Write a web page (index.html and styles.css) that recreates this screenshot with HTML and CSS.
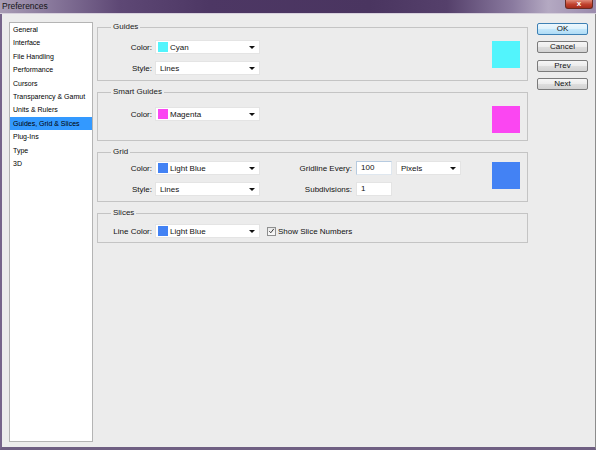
FILE: index.html
```html
<!DOCTYPE html>
<html>
<head>
<meta charset="utf-8">
<link rel="stylesheet" href="styles.css">
</head>
<body>
<div class="window">
  <div class="titlebar">
    <span class="title">Preferences</span>
    <span class="close">x</span>
  </div>
  <div class="body">
    <ul class="nav">
      <li>General</li>
      <li>Interface</li>
      <li>File Handling</li>
      <li>Performance</li>
      <li>Cursors</li>
      <li>Transparency &amp; Gamut</li>
      <li>Units &amp; Rulers</li>
      <li class="sel">Guides, Grid &amp; Slices</li>
      <li>Plug-Ins</li>
      <li>Type</li>
      <li>3D</li>
    </ul>
    <div class="panel">
      <fieldset class="group g-guides">
        <legend>Guides</legend>
        <div class="gbody">
          <div class="rows">
            <div class="row"><span class="lbl">Color:</span><div class="dd"><span class="chip cyan"></span>Cyan<i class="arrow"></i></div></div>
            <div class="row"><span class="lbl">Style:</span><div class="dd plain">Lines<i class="arrow"></i></div></div>
          </div>
          <div class="swatch cyan sw-guides"></div>
        </div>
      </fieldset>
      <fieldset class="group g-smart">
        <legend>Smart Guides</legend>
        <div class="gbody">
          <div class="rows rows-smart">
            <div class="row"><span class="lbl">Color:</span><div class="dd"><span class="chip magenta"></span>Magenta<i class="arrow"></i></div></div>
          </div>
          <div class="swatch magenta"></div>
        </div>
      </fieldset>
      <fieldset class="group g-grid">
        <legend>Grid</legend>
        <div class="gbody">
          <div class="rows">
            <div class="row">
              <span class="lbl">Color:</span><div class="dd"><span class="chip blue"></span>Light Blue<i class="arrow"></i></div>
              <span class="lbl2">Gridline Every:</span><div class="inp focus">100</div><div class="dd plain dd-small">Pixels<i class="arrow"></i></div>
            </div>
            <div class="row">
              <span class="lbl">Style:</span><div class="dd plain">Lines<i class="arrow"></i></div>
              <span class="lbl2">Subdivisions:</span><div class="inp">1</div>
            </div>
          </div>
          <div class="swatch blue sw-grid"></div>
        </div>
      </fieldset>
      <fieldset class="group g-slices">
        <legend>Slices</legend>
        <div class="gbody">
          <div class="rows">
            <div class="row">
              <span class="lbl">Line Color:</span><div class="dd"><span class="chip blue"></span>Light Blue<i class="arrow"></i></div>
              <span class="check"><svg width="8" height="8" viewBox="0 0 8 8"><path d="M1.5 4.2 L3.2 6 L6.6 1.6" fill="none" stroke="#333" stroke-width="1.1"/></svg></span>
              <span class="checklbl">Show Slice Numbers</span>
            </div>
          </div>
        </div>
      </fieldset>
    </div>
    <div class="buttons">
      <div class="btn default">OK</div>
      <div class="btn">Cancel</div>
      <div class="btn">Prev</div>
      <div class="btn">Next</div>
    </div>
  </div>
</div>
</body>
</html>
```
FILE: styles.css
```css
* { box-sizing: border-box; }
html, body { margin: 0; padding: 0; }
body {
  width: 596px;
  height: 450px;
  overflow: hidden;
  font-family: "Liberation Sans", Arial, sans-serif;
  color: #111;
}
.window {
  width: 596px;
  height: 450px;
  display: flex;
  flex-direction: column;
  border-left: 2px solid #76648a;
  border-right: 1px solid #8c8c8c;
  border-bottom: 3px solid #6f5f82;
  background: #ececec;
}
.titlebar {
  height: 14px;
  flex: none;
  display: flex;
  align-items: flex-start;
  margin-left: -2px;
  margin-right: -1px;
  background: linear-gradient(90deg, #a99db5 0%, #8a7a9d 8%, #5e4875 20%, #4d3764 35%, #4a3560 62%, #55406b 75%, #8a7a9f 86%, #b4a9c2 92%, #9a8aac 100%);
  border-bottom: 1px solid #d6d0dc;
}
.title {
  font-size: 8.5px;
  line-height: 13px;
  margin-left: 2px;
  color: #151515;
}
.close {
  margin-left: auto;
  margin-right: 3px;
  width: 28px;
  height: 9px;
  border-radius: 0 0 3px 3px;
  background: linear-gradient(#e08a78, #c0412d 55%, #a82c1c);
  border: 1px solid #6a2a22;
  border-top: none;
  color: #fff;
  font-size: 8px;
  font-weight: bold;
  line-height: 8px;
  text-align: center;
}
.body {
  flex: 1;
  display: flex;
  align-items: flex-start;
  padding: 8px 7px 4px 7px;
}
.nav {
  list-style: none;
  margin: 0;
  padding: 0;
  width: 84px;
  height: 420px;
  flex: none;
  background: #fff;
  border: 1px solid #b4b4b4;
  font-size: 7px;
}
.nav li {
  height: 13.4px;
  line-height: 13.4px;
  padding-left: 3px;
  white-space: nowrap;
  color: #000;
}
.nav li.sel {
  background: #3399ff;
  color: #000;
}
.panel {
  width: 431px;
  margin-left: 4px;
  flex: none;
  display: flex;
  flex-direction: column;
  gap: 6px;
}
.group {
  margin: 0;
  padding: 0;
  min-width: 0;
  border: 1px solid #c4c4c4;
  font-size: 8px;
}
.group legend {
  margin-left: 13px;
  padding: 0 2px;
  font-size: 8px;
  line-height: 10px;
  color: #1a1a1a;
}
.gbody {
  display: flex;
  align-items: flex-start;
}
.g-guides .gbody { padding-top: 8px; padding-bottom: 5px; }
.g-smart .gbody { padding-top: 9px; padding-bottom: 7px; }
.g-grid .gbody { padding-top: 4px; padding-bottom: 5px; }
.g-slices .gbody { padding-top: 6px; padding-bottom: 4px; }
.rows {
  display: flex;
  flex-direction: column;
  gap: 7px;
}
.rows-smart { margin-top: 1px; }
.row {
  display: flex;
  align-items: center;
  height: 14px;
}
.lbl {
  width: 54px;
  margin-right: 3px;
  text-align: right;
  white-space: nowrap;
}
.lbl2 {
  width: 92px;
  margin-right: 4px;
  text-align: right;
  white-space: nowrap;
}
.dd {
  position: relative;
  width: 105px;
  height: 14px;
  background: #fff;
  border: 1px solid #e4e4e4;
  display: flex;
  align-items: center;
  padding-left: 2px;
  white-space: nowrap;
}
.dd.plain { padding-left: 4px; }
.dd-small { width: 65px; margin-left: 4px; }
.arrow {
  position: absolute;
  right: 4px;
  top: 5px;
  width: 0;
  height: 0;
  border-left: 3px solid transparent;
  border-right: 3px solid transparent;
  border-top: 3px solid #111;
}
.chip {
  width: 10px;
  height: 10px;
  margin-right: 2px;
  flex: none;
}
.inp {
  width: 36px;
  height: 14px;
  background: #fff;
  border: 1px solid #e4e4e4;
  padding-left: 4px;
  line-height: 12px;
}
.inp.focus {
  border-color: #b7cbe0 #dfe7ef #dfe7ef #b7cbe0;
}
.swatch {
  width: 28px;
  height: 27px;
  margin-left: auto;
  margin-right: 7px;
  flex: none;
}
.sw-guides { margin-top: 1px; }
.sw-grid { margin-top: 1px; }
.cyan { background: #52f4fc; }
.magenta { background: #fb46f2; }
.blue { background: #4382f4; }
.check {
  width: 9px;
  height: 9px;
  margin-left: 7px;
  margin-right: 2px;
  border: 1px solid #8e8f8f;
  background: linear-gradient(#e8e8e8, #fafafa);
  display: flex;
  align-items: center;
  justify-content: center;
}
.check svg { display: block; }
.checklbl { white-space: nowrap; }
.buttons {
  width: 51px;
  margin-left: 9px;
  margin-top: 1px;
  flex: none;
  display: flex;
  flex-direction: column;
  gap: 6.3px;
}
.btn {
  height: 12px;
  border: 1px solid #7b7b7b;
  border-radius: 2px;
  background: linear-gradient(#f6f6f6, #ececec 48%, #dddddd 52%, #d2d2d2);
  font-size: 8px;
  line-height: 10px;
  text-align: center;
  color: #111;
}
.btn.default {
  border-color: #3d80b4;
  background: linear-gradient(#edf7fd, #ddf1fc 48%, #c4e7fb 52%, #b0dcf5);
}
```
